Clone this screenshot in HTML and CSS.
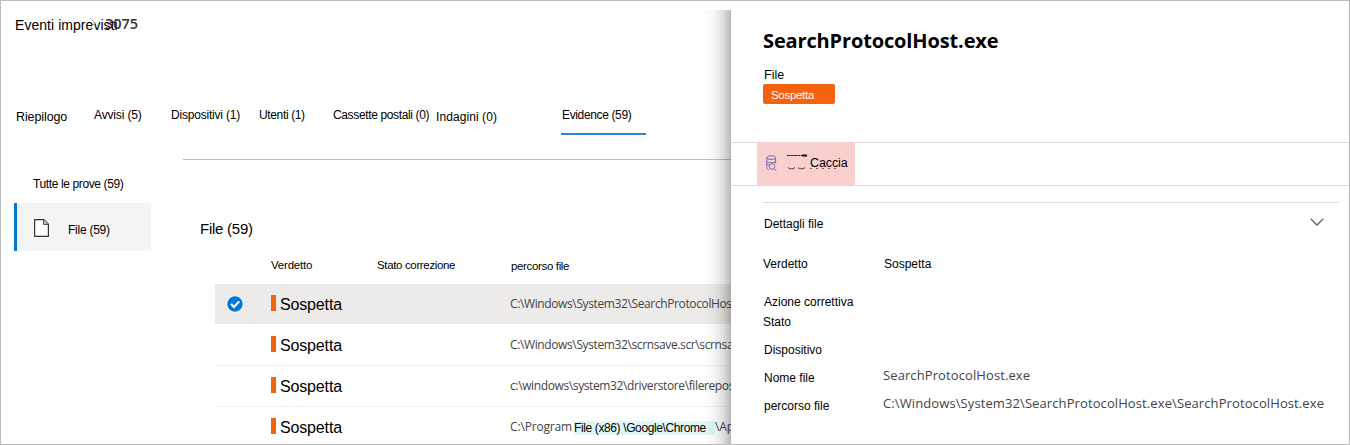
FILE: index.html
```html
<!DOCTYPE html>
<html lang="it">
<head>
<meta charset="utf-8">
<title>Eventi imprevisti</title>
<link rel="stylesheet" href="styles.css">
</head>
<body>
<div class="page">
  <main class="incident">
    <div class="crumbs">
      <span class="crumb-root">Eventi imprevisti</span>
      <svg class="crumb-sep" width="7" height="12" viewBox="0 0 7 12"><path d="M1 1l5 5-5 5" fill="none" stroke="#b5b5b5"/></svg>
      <span class="crumb-id">3075</span>
    </div>
    <nav class="tabs">
      <span class="tab low wide">Riepilogo</span>
      <span class="tab t1">Avvisi (5)</span>
      <span class="tab t2">Dispositivi (1)</span>
      <span class="tab t3">Utenti (1)</span>
      <span class="tab t3">Cassette postali (0)</span>
      <span class="tab low t0">Indagini (0)</span>
      <span class="tab t3 active">Evidence (59)</span>
    </nav>
    <div class="tabs-rule"></div>
    <div class="body">
      <aside class="side">
        <div class="side-all">Tutte le prove (59)</div>
        <div class="side-item">
          <svg class="doc" width="15" height="18" viewBox="0 0 15 18"><path d="M.6.6h9.2l4.6 4.6v12.2H.6z" fill="#fff" stroke="#333" stroke-width="1.2"/><path d="M9.6.6v4.8h4.8" fill="#ccc" stroke="#444"/></svg>
          <span>File (59)</span>
        </div>
      </aside>
      <section class="evidence">
        <h2>File (59)</h2>
        <div class="row head"><span></span><span class="h1st">Verdetto</span><span>Stato correzione</span><span class="h3rd">percorso file</span></div>
        <div class="row selected">
          <svg class="check" width="18" height="18" viewBox="0 0 18 18"><circle cx="9" cy="9" r="8.4" fill="#0078d4" stroke="#fff" stroke-width="1.2"/><path d="M5 9l3 3 5.2-5.6" fill="none" stroke="#fff" stroke-width="2"/></svg>
          <span class="verdict">Sospetta</span><span></span><span class="path">C:\Windows\System32\SearchProtocolHost.exe</span>
        </div>
        <div class="row second"><span></span><span class="verdict">Sospetta</span><span></span><span class="path">C:\Windows\System32\scrnsave.scr\scrnsave.scr</span></div>
        <div class="row"><span></span><span class="verdict">Sospetta</span><span></span><span class="path">c:\windows\system32\driverstore\filerepository</span></div>
        <div class="row last"><span></span><span class="verdict">Sospetta</span><span></span><span class="path loose">C:\Program <mark>File (x86) \Google\Chrome</mark>\Application</span></div>
      </section>
    </div>
  </main>
  <aside class="panel">
    <h1>SearchProtocolHost.exe</h1>
    <div class="kind">File</div>
    <div class="badge">Sospetta</div>
    <div class="actions">
      <div class="hunt">
        <svg class="hunt-icon" width="11" height="17" viewBox="0 0 11 17" fill="none" stroke="#7470b4"><ellipse cx="5.2" cy="2.6" rx="4.4" ry="1.9"/><path d="M.8 2.6v10c0 1 1 1.7 2 1.9M9.6 2.6v6M.8 5.8c0 2.5 8.8 2.5 8.8 0M.8 8.8c1 1.2 2.2 1.5 3.4 1.5"/><circle cx="6" cy="11.4" r="2.9"/><path d="M8 13.6l2.4 2.6"/></svg>
        <svg class="marks" width="56" height="18" viewBox="0 0 56 18" fill="none"><path d="M0 2.5h15" stroke="#39201f" stroke-dasharray="3 .5"/><path d="M15 2.5h5" stroke="#000" stroke-width="2"/><path d="M1 14.5c1 1.8 6 1.8 7 0M11 14.5c1 1.8 6 1.8 7 0" stroke="#5b3232"/><path d="M23 15.5h29" stroke="#9a4a48" stroke-dasharray="2 4"/></svg>
        <span>Caccia</span>
      </div>
    </div>
    <div class="details">
      <div class="details-head"><span>Dettagli file</span><svg width="14" height="8" viewBox="0 0 14 8"><path d="M.6.6L7 7l6.4-6.4" fill="none" stroke="#6b5a45" stroke-width="1.3"/></svg></div>
      <dl>
        <dt class="r1">Verdetto</dt><dd class="r1 plain">Sospetta</dd>
        <dt class="r2">Azione correttiva<br><span class="state">Stato</span></dt><dd></dd>
        <dt class="r3">Dispositivo</dt><dd></dd>
        <dt class="r4">Nome file</dt><dd class="name">SearchProtocolHost.exe</dd>
        <dt class="r5">percorso file</dt><dd class="full">C:\Windows\System32\SearchProtocolHost.exe\SearchProtocolHost.exe</dd>
      </dl>
    </div>
  </aside>
</div>
</body>
</html>
```
FILE: styles.css
```css
* { box-sizing: border-box; }
body { margin: 0; background: #fff; color: #000; font: 12px/16px "Liberation Sans", Arial, sans-serif; }
h1, h2, dl, dd { margin: 0; }
svg { display: block; flex: none; }
span { white-space: pre; }
.page { display: flex; width: 1350px; height: 445px; border: 1px solid #bbb; overflow: hidden; }

.incident { position: relative; width: 730px; overflow: hidden; }
.incident::after { content: ""; position: absolute; top: 9px; right: 0; bottom: 0; width: 28px; background: linear-gradient(90deg, rgba(0,0,0,0), rgba(0,0,0,.04) 40%, rgba(0,0,0,.12) 70%, rgba(0,0,0,.28)); }
.crumbs { display: flex; height: 97px; padding: 14px 0 0 14px; }
.crumb-root { width: 73px; font-size: 14px; line-height: 20px; letter-spacing: .05px; }
.crumb-sep { margin: 2px 9px 0 1px; }
.crumb-id { font: 600 14.5px/20px "Open Sans", sans-serif; color: #333; margin-top: -1px; }

.tabs { display: grid; grid-template-columns: 78px 77px 88px 74px 103px 125px 85px; height: 37px; padding-left: 15px; }
.tab { padding-top: 9px; }
.low { padding-top: 11px; }
.t0 { letter-spacing: .08px; }
.wide { font-size: 12.5px; letter-spacing: -.1px; }
.t1 { letter-spacing: -.15px; }
.t2 { letter-spacing: -.2px; }
.t3 { letter-spacing: -.36px; }
.active { border-bottom: 2px solid #2b88d8; padding-left: 1px; }
.tabs-rule { height: 1px; margin: 24px 0 0 182px; background: #c0c0c0; }

.body { display: flex; }
.side { width: 182px; padding: 16px 32px 0 13px; flex: none; }
.side-all { padding-left: 19px; letter-spacing: -.38px; white-space: nowrap; }
.side-item { display: flex; height: 48px; margin-top: 11px; padding: 16px 0 0 17px; gap: 19px; background: #f4f4f4; border-left: 3px solid #0078d4; letter-spacing: -.25px; }
.side-item span { padding-top: 3px; }
.evidence { flex: 1; min-width: 0; padding: 59px 0 0 32px; }
.evidence h2 { margin: 0 0 18px -15px; font-size: 15px; line-height: 20px; font-weight: 400; letter-spacing: -.25px; }
.row { display: grid; grid-template-columns: 56px 106px 133px 1fr; height: 41px; align-items: start; border-bottom: 1px solid #f0f0f0; }
.row > span:last-child { min-width: 0; overflow: hidden; }
.head { height: 27px; border: 0; font-size: 11.5px; letter-spacing: -.35px; }
.h1st { letter-spacing: -.2px; }
.h3rd { padding: 1px 0 0 1px; }
.selected { height: 40px; background: #edebe9; border: 0; }
.second { height: 42px; padding-top: 1px; }
.last { border: 0; }
.check { margin: 11px 0 0 11px; }
.verdict { display: flex; gap: 4px; padding-top: 10px; font-size: 16px; line-height: 21px; letter-spacing: -.15px; }
.verdict::before { content: ""; width: 5px; height: 16px; margin-top: 1px; background: #f4620e; }
.path { padding-top: 10px; font: 12px/20px "Open Sans", sans-serif; letter-spacing: -.38px; color: #444; }
.loose { letter-spacing: -.16px; }
mark { display: inline-block; width: 141px; height: 14px; margin-left: -1px; background: #e0f5f5; color: #000; font: 12px/14px "Liberation Sans", sans-serif; letter-spacing: -.38px; vertical-align: -1px; }

.panel { width: 618px; background: #fff; }
.panel h1 { margin: 25px 0 0 32px; font: 700 20px/30px "Open Sans", sans-serif; letter-spacing: -.14px; }
.kind { margin: 11px 0 0 33px; font-size: 12.5px; }
.badge { width: 72px; height: 20px; margin: 1px 0 0 32px; padding: 3px 0 0 8px; border-radius: 2px; background: #f4620e; color: #fff; font-size: 11.5px; letter-spacing: -.3px; }
.actions { height: 44px; margin-top: 38px; padding-left: 26px; border: solid #ddd; border-width: 1px 0; }
.hunt { display: flex; width: 98px; height: 44px; margin-top: -1px; padding: 13px 0 0 9px; background: #f9d0ce; }
.marks { margin: -2px -33px 0 10px; }
.hunt span { font-size: 12.5px; letter-spacing: -.1px; }
.details { margin: 16px 10px 0 32px; border-top: 1px solid #ddd; }
.details-head { display: flex; justify-content: space-between; padding: 13px 15px 0 1px; height: 53px; }
.details-head svg { margin-top: 2px; }
dl { display: grid; grid-template-columns: 120px 1fr; grid-template-rows: 38px 48px 28px 28px 28px; }
dt, dd { white-space: nowrap; }
.r2, .r3, .r4, .r5 { padding-left: 1px; }
.r2 { line-height: 20px; margin-top: -2px; }
.state { margin-left: -1px; }
.plain { padding-left: 1px; }
.name, .full { font: 13px/16px "Open Sans", sans-serif; letter-spacing: .1px; color: #444; margin-top: -3px; }
```
